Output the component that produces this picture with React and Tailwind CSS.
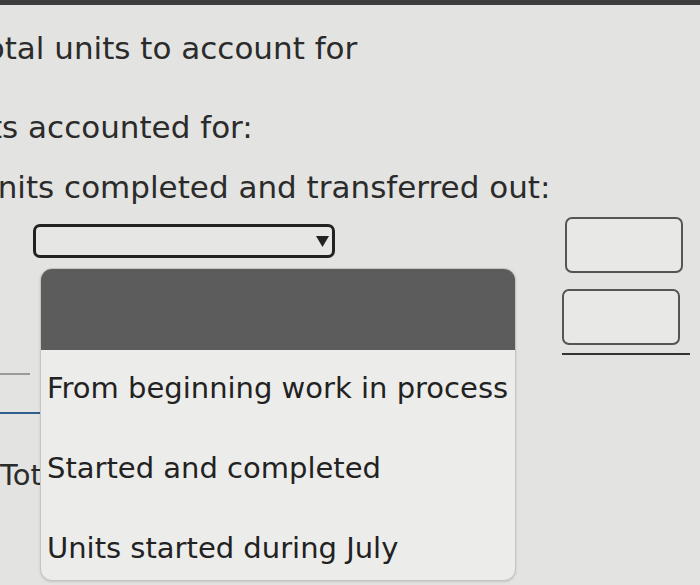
// Units accounted for - dropdown open
const font = { fontFamily: '"DejaVu Sans", Verdana, sans-serif' };

const options = [
  'From beginning work in process',
  'Started and completed',
  'Units started during July',
];

function Dropdown() {
  return (
    <div className="absolute left-[40px] top-[268px] w-[476px] h-[313px] rounded-[12px] overflow-hidden border border-[#c4c4c2] bg-[#ececeb] shadow-sm">
      <div className="h-[81px] bg-[#5c5c5c]" />
      <ul className="pl-[6px] pt-[20px]">
        {options.map((o) => (
          <li key={o} className="h-[80px] text-[29px] leading-[36px] text-[#222] whitespace-nowrap">
            {o}
          </li>
        ))}
      </ul>
    </div>
  );
}

export default function App() {
  return (
    <div className="relative w-[700px] h-[585px] overflow-hidden bg-[#e3e3e1] text-[#2b2b2b]" style={font}>
      <div className="h-[5px] bg-[#3d3d3d]" />

      <div className="pt-[25px] text-[31px] leading-[36px]">
        <p className="ml-[-28px] whitespace-nowrap">Total units to account for</p>
        <p className="ml-[-61px] mt-[43px] whitespace-nowrap">Units accounted for:</p>
        <p className="ml-[-25px] mt-[24px] whitespace-nowrap">Units completed and transferred out:</p>
      </div>

      <div className="flex items-start mt-[12px]">
        <div className="ml-[33px] mt-[7px] w-[302px] h-[34px] rounded-[7px] border-[3px] border-[#222] bg-[#e6e6e4] flex items-center justify-end pr-[3px]">
          <svg width="13" height="11" viewBox="0 0 13 11">
            <path d="M0 0 H13 L6.5 11 Z" fill="#222" />
          </svg>
        </div>
        <div className="ml-auto mr-[17px] flex flex-col items-end">
          <div className="w-[118px] h-[56px] rounded-[7px] border-2 border-[#555] bg-[#e8e8e6]" />
          <div className="mr-[3px] mt-[16px] w-[118px] h-[56px] rounded-[7px] border-2 border-[#555] bg-[#e8e8e6]" />
          <div className="mr-[-7px] mt-[8px] w-[128px] h-[2px] bg-[#333]" />
        </div>
      </div>

      <div className="mt-[18px] w-[30px] h-[2px] bg-[#9a9a9a]" />
      <div className="mt-[37px] w-[45px] h-[2px] bg-[#2f5f8f]" />
      <p className="mt-[43px] text-[29px] leading-[36px] whitespace-nowrap">Total units accounted for</p>

      <Dropdown />
    </div>
  );
}
